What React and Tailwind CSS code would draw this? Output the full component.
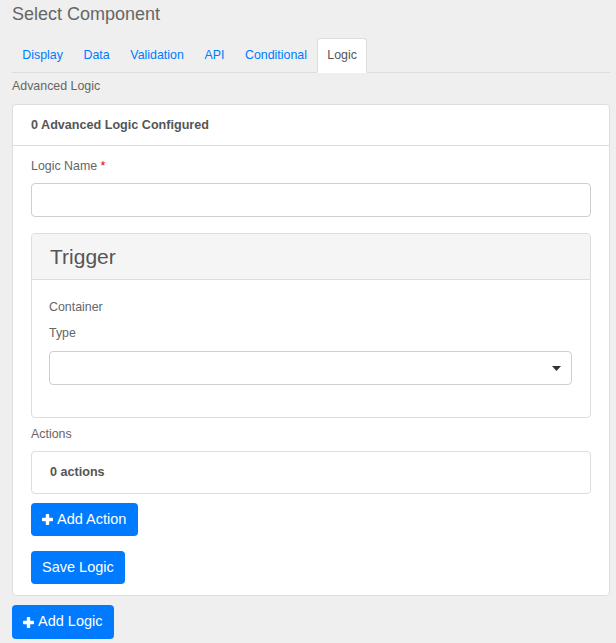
import React from "react";

function Plus() {
  return (
    <svg width="11" height="11" viewBox="0 0 11 11" className="shrink-0">
      <rect x="3.8" y="0" width="3.4" height="11" rx="0.8" fill="white" />
      <rect x="0" y="3.8" width="11" height="3.4" rx="0.8" fill="white" />
    </svg>
  );
}

export default function App() {
  const tabs = ["Display", "Data", "Validation", "API", "Conditional"];
  return (
    <div
      className="min-h-[643px] bg-[#efefef] pl-[12px] pr-[6px] text-[#555]"
      style={{ fontFamily: '"Liberation Sans", Arial, sans-serif' }}
    >
      <div className="pt-[3px] text-[18px] leading-[22px] text-[#666]">Select Component</div>

      <div className="mt-[13px] flex border-b border-[#dddddd]">
        {tabs.map((t) => (
          <div
            key={t}
            className="px-[10.3px] py-[9px] text-[12.4px] leading-[16px] text-[#007bff]"
          >
            {t}
          </div>
        ))}
        <div className="-mb-px rounded-t-[4px] border border-[#dddddd] border-b-white bg-white px-[9px] py-[8px] text-[12.4px] leading-[16px] text-[#555]">
          Logic
        </div>
      </div>

      <div className="mt-[6px] text-[12.4px] leading-[15px] text-[#666]">Advanced Logic</div>

      <div className="mt-[10px] rounded-[4px] border border-[#dddddd] bg-white">
        <div className="border-b border-[#dddddd] px-[18px] py-[12px] text-[12.6px] font-bold leading-[16px] text-[#555]">
          0 Advanced Logic Configured
        </div>
        <div className="px-[18px] pt-[13px] pb-[11px]">
          <div className="text-[12.4px] leading-[15px] text-[#666]">
            Logic Name <span className="text-[#e00]">*</span>
          </div>
          <div className="mt-[9px] h-[34px] rounded-[4px] border border-[#cfcfcf] bg-white"></div>

          <div className="mt-[16px] rounded-[4px] border border-[#dddddd]">
            <div className="rounded-t-[4px] border-b border-[#dddddd] bg-[#f5f5f5] px-[18px] py-[10px] text-[21px] leading-[25px] text-[#555]">
              Trigger
            </div>
            <div className="pl-[17px] pr-[18px] pt-[20px] pb-[32px]">
              <div className="text-[12.4px] leading-[15px] text-[#666]">Container</div>
              <div className="mt-[11px] text-[12.4px] leading-[15px] text-[#666]">Type</div>
              <div className="mt-[10px] flex h-[34px] items-center justify-end rounded-[4px] border border-[#cfcfcf] bg-white pr-[10px]">
                <svg width="9" height="5" viewBox="0 0 9 5">
                  <path d="M0 0 L9 0 L4.5 5 Z" fill="#333" />
                </svg>
              </div>
            </div>
          </div>

          <div className="mt-[9px] text-[12.4px] leading-[15px] text-[#666]">Actions</div>
          <div className="mt-[9px] flex h-[43px] items-center rounded-[4px] border border-[#dddddd] px-[18px] text-[12.6px] font-bold text-[#555]">
            0 actions
          </div>

          <button className="mt-[9px] flex h-[33px] items-center gap-[4px] rounded-[4px] bg-[#007bff] pl-[11px] pr-[12px] text-[14.5px] text-white">
            <Plus />
            <span>Add Action</span>
          </button>
          <button className="mt-[15px] flex h-[33px] items-center rounded-[4px] bg-[#007bff] px-[11px] text-[14.5px] text-white">
            Save Logic
          </button>
        </div>
      </div>

      <button className="mt-[9px] flex h-[34px] items-center gap-[4px] rounded-[4px] bg-[#007bff] px-[11px] text-[14.5px] text-white">
        <Plus />
        <span>Add Logic</span>
      </button>
    </div>
  );
}
